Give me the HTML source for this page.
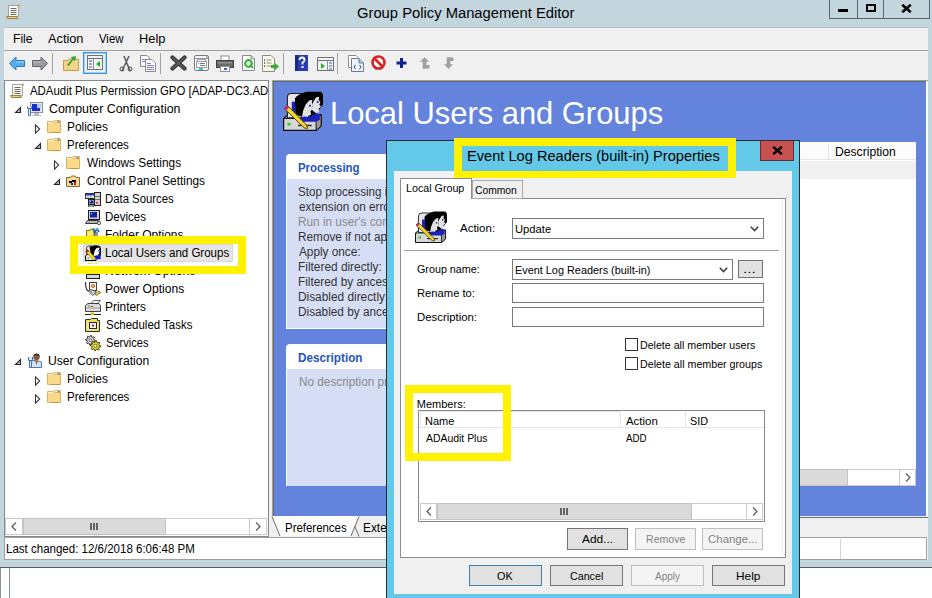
<!DOCTYPE html>
<html><head><meta charset="utf-8"><style>
html,body{margin:0;padding:0;width:932px;height:598px;overflow:hidden;background:#c4d6dd}
body>div,body>span,body>svg{position:absolute}
.t{position:absolute;white-space:nowrap;font-family:"Liberation Sans",sans-serif;line-height:normal;transform-origin:0 0}
#dlg div,#dlg span,#dlg svg{position:absolute}
</style></head><body>
<div style="left:0px;top:0px;width:932px;height:598px;background:#c4d6dd"></div>
<svg style="position:absolute;left:5px;top:4px" width="16" height="16" viewBox="0 0 16 16"><path d="M3.5 1.5 H13.5 V12.5 H3.5 Z" fill="#fffbe0" stroke="#a0a0a0" stroke-width="1"/><path d="M4 2 H13 V7 H4Z" fill="#ffffff"/><path d="M5.5 4.5h6M5.5 6.5h6M5.5 8.5h6M5.5 10.5h6" stroke="#6a6a6a" stroke-width="1"/><path d="M1.5 12.5 H11.5 L12.5 14.5 H2.5Z" fill="#f3cf6a" stroke="#9a8050" stroke-width="1"/><path d="M13 0.5 h2 v2 h-2z" fill="#eca035"/></svg>
<span class="t" style="left:356.76px;top:4px;font-size:15.5px;color:#000;transform:scaleX(0.9526);">Group Policy Management Editor</span>
<div style="left:829px;top:-1px;width:101px;height:20px;border:1px solid #5f6368;box-sizing:border-box;border-top:none"></div>
<div style="left:857px;top:0px;width:1px;height:19px;background:#5f6368"></div>
<div style="left:883px;top:0px;width:1px;height:19px;background:#5f6368"></div>
<div style="left:838px;top:9px;width:10px;height:3px;background:#000"></div>
<div style="left:866px;top:4px;width:10px;height:8px;border:2px solid #000;box-sizing:border-box"></div>
<svg style="left:901px;top:4px;" width="11" height="9" viewBox="0 0 11 9"><path d="M1.2 0.8 L9.8 8.2 M9.8 0.8 L1.2 8.2" stroke="#000" stroke-width="2.6"/></svg>
<div style="left:4px;top:27px;width:924px;height:533px;background:#f0f0f0"></div>
<div style="left:4px;top:27px;width:924px;height:1px;background:#b6bcc0"></div>
<span class="t" style="left:13.01px;top:32px;font-size:12px;color:#000;transform:scaleX(1.0102);">File</span>
<span class="t" style="left:47.98px;top:32px;font-size:12px;color:#000;transform:scaleX(1.0630);">Action</span>
<span class="t" style="left:98.95px;top:32px;font-size:12px;color:#000;transform:scaleX(0.9467);">View</span>
<span class="t" style="left:138.95px;top:32px;font-size:12px;color:#000;transform:scaleX(1.0694);">Help</span>
<div style="left:4px;top:50px;width:924px;height:1px;background:#a0a0a0"></div>
<svg style="position:absolute;left:9px;top:56px" width="16" height="15" viewBox="0 0 16 15"><path d="M0.5 7.5 L7 1 V4.5 H15.5 V10.5 H7 V14 Z" fill="#52acef" stroke="#2a7cc8" stroke-width="1"/><path d="M7 5 H15 V7 H7Z" fill="#7cc4f8"/></svg>
<svg style="position:absolute;left:32px;top:56px" width="16" height="15" viewBox="0 0 16 15"><path d="M15.5 7.5 L9 1 V4.5 H0.5 V10.5 H9 V14 Z" fill="#9a9ea4" stroke="#606468" stroke-width="1"/><path d="M1 5 H9 V7 H1Z" fill="#b0b0b0"/></svg>
<div style="left:52px;top:53px;width:1px;height:21px;background:#a0a0a0"></div>
<svg style="position:absolute;left:63px;top:55px" width="16" height="16" viewBox="0 0 16 16"><path d="M0.5 5.5 H5 L6 4 H15.5 V15.5 H0.5Z" fill="#f2d48a" stroke="#c69a48"/><path d="M4 10 L9 4 L8 2 L13 1 L12 6 L10 5 L6 11Z" fill="#2ea82e"/></svg>
<div style="left:83px;top:52px;width:24px;height:22px;background:#eaf2f9;border:1px solid #3b8fdc;box-shadow:inset 0 0 0 0.5px #6aaee8;box-sizing:border-box"></div>
<svg style="position:absolute;left:87px;top:55px" width="16" height="16" viewBox="0 0 16 16"><rect x="0.5" y="0.5" width="15" height="14" fill="#f4f4f4" stroke="#707070"/><path d="M0.5 3.5 H15.5" stroke="#707070"/><path d="M2 6h3M2 9h3M2 12h3" stroke="#3060c0"/><path d="M6.5 3.5 V14.5" stroke="#909090"/><path d="M13 6 L9 9 L13 12Z" fill="#20b030"/></svg>
<svg style="position:absolute;left:119px;top:55px" width="14" height="17" viewBox="0 0 14 17"><path d="M3 16 L10 1 M11 16 L5 1" stroke="#606060" stroke-width="1.6"/><circle cx="3" cy="14" r="2" fill="none" stroke="#505050"/><circle cx="11" cy="14" r="2" fill="none" stroke="#505050"/></svg>
<svg style="position:absolute;left:140px;top:55px" width="16" height="17" viewBox="0 0 16 17"><path d="M0.5 0.5 H7 L9.5 3 V11.5 H0.5Z" fill="#fff" stroke="#8a8a8a"/><path d="M2 4.5h4M2 6.5h5" stroke="#8a7ad8"/><path d="M5.5 4.5 H12 L15.5 8 V16.5 H5.5Z" fill="#fff" stroke="#8a8a8a"/><path d="M7 8.5h4M7 10.5h7M7 12.5h7M7 14.5h7" stroke="#8a7ad8"/></svg>
<div style="left:160px;top:53px;width:1px;height:21px;background:#a0a0a0"></div>
<svg style="position:absolute;left:170px;top:55px" width="17" height="16" viewBox="0 0 17 16"><path d="M2.5 2.5 L14.5 13.5 M14.5 2.5 L2.5 13.5" stroke="#3a3a3a" stroke-width="4.2" stroke-linecap="round"/><path d="M2.5 2.5 L14.5 13.5 M14.5 2.5 L2.5 13.5" stroke="#606060" stroke-width="1.4" stroke-linecap="round"/></svg>
<svg style="position:absolute;left:194px;top:55px" width="15" height="16" viewBox="0 0 15 16"><rect x="0.5" y="0.5" width="14" height="15" rx="1.5" fill="#f6f6f6" stroke="#7a7a7a"/><path d="M1 3.5 H14" stroke="#9a9a9a"/><rect x="12" y="1.5" width="1.5" height="1" fill="#606060"/><rect x="3.5" y="4.5" width="8" height="2" fill="#eef" stroke="#a0a0b8"/><rect x="2.5" y="6.5" width="10" height="6" fill="#fff" stroke="#a0a0a0"/><rect x="4" y="8" width="1.2" height="1.2" fill="#20b0e8"/><path d="M6 8.5h5M6 10.5h5" stroke="#7a7a7a"/><rect x="5" y="13" width="4" height="2" fill="#30c0e8"/></svg>
<svg style="position:absolute;left:216px;top:55px" width="18" height="17" viewBox="0 0 18 17"><rect x="5" y="1" width="8" height="5" fill="#fff" stroke="#909090"/><rect x="0.5" y="5.5" width="17" height="7" fill="#6a6a6a" stroke="#404040"/><rect x="2" y="7" width="14" height="1.5" fill="#909090"/><rect x="4.5" y="11.5" width="9" height="5" fill="#fff" stroke="#909090"/><rect x="8" y="13" width="3" height="2" fill="#3060d0"/></svg>
<svg style="position:absolute;left:242px;top:55px" width="13" height="16" viewBox="0 0 13 16"><path d="M0.5 0.5 H9 L12.5 4 V15.5 H0.5Z" fill="#fff" stroke="#8a8a8a"/><path d="M9 0.5 V4 H12.5" fill="none" stroke="#8a8a8a"/><circle cx="6.5" cy="8.5" r="3.3" fill="none" stroke="#30b830" stroke-width="2.2"/><path d="M8 10 L11 13" stroke="#30b830" stroke-width="2"/></svg>
<svg style="position:absolute;left:262px;top:55px" width="18" height="17" viewBox="0 0 18 17"><path d="M0.5 0.5 H9 L12.5 4 V16.5 H0.5Z" fill="#fffbe8" stroke="#8a8a8a"/><path d="M2 5h1M2 8h1M2 11h1" stroke="#404040" stroke-width="1.4"/><path d="M4.5 5h5M4.5 8h5M4.5 11h5" stroke="#8a8a8a"/><path d="M9 10 H13 V8 L17 11.5 L13 15 V13 H9Z" fill="#30b030"/></svg>
<div style="left:283px;top:53px;width:1px;height:21px;background:#a0a0a0"></div>
<svg style="position:absolute;left:295px;top:55px" width="13" height="16" viewBox="0 0 13 16"><rect x="0" y="0" width="13" height="16" fill="#2a3cb0"/><rect x="0" y="0" width="3" height="16" fill="#1a2a80"/><path d="M4.5 5 Q4.5 2.5 7 2.5 Q9.5 2.5 9.5 5 Q9.5 6.5 7.5 7.5 V9.5" fill="none" stroke="#fff" stroke-width="1.8"/><rect x="6.5" y="11" width="2" height="2" fill="#fff"/></svg>
<svg style="position:absolute;left:317px;top:57px" width="17" height="15" viewBox="0 0 17 15"><rect x="0.5" y="0.5" width="16" height="13" fill="#f4f4f4" stroke="#707070"/><path d="M0.5 3.5 H16.5" stroke="#707070"/><path d="M10.5 3.5 V13.5" stroke="#909090"/><path d="M4 6 L8 9 L4 12Z" fill="#20b030"/><path d="M12 6h3M12 9h3M12 12h3" stroke="#3060c0"/></svg>
<div style="left:337px;top:53px;width:1px;height:21px;background:#a0a0a0"></div>
<svg style="position:absolute;left:348px;top:55px" width="16" height="17" viewBox="0 0 16 17"><path d="M0.5 0.5 H8 L10 2.5 V12.5 H0.5Z" fill="#fff" stroke="#8a8a8a"/><path d="M3.5 3.5 H11 L15.5 8 V16.5 H3.5Z" fill="#eef4fb" stroke="#707a88"/><path d="M11 3.5 V8 H15.5" fill="#9ec9f0" stroke="#707a88"/><path d="M7.5 10 L6 12 L7.5 14 M11.5 10 L13 12 L11.5 14" stroke="#2040b0" fill="none"/></svg>
<svg style="position:absolute;left:371px;top:55px" width="15" height="15" viewBox="0 0 15 15"><circle cx="7.5" cy="7.5" r="6" fill="#fff" stroke="#e02020" stroke-width="2.6"/><path d="M3.5 3.5 L11.5 11.5" stroke="#e02020" stroke-width="2.6"/><path d="M12 13 a6 6 0 0 1 -9 0" stroke="#606060" stroke-width="0.8" fill="none"/></svg>
<svg style="position:absolute;left:396px;top:58px" width="11" height="10" viewBox="0 0 11 10"><path d="M5.5 0 V10 M0.5 5 H10.5" stroke="#10208a" stroke-width="3"/></svg>
<svg style="position:absolute;left:420px;top:57px" width="10" height="12" viewBox="0 0 10 12"><path d="M0.5 4.5 L4.5 0.5 L8.5 4.5 H6 V11.5 H3 V4.5Z" fill="#a0a0a0" stroke="#a0a0a0" stroke-width="0.6"/><path d="M6 8 H9.5 V11.5 H6Z" fill="#a0a0a0"/></svg>
<svg style="position:absolute;left:444px;top:57px" width="10" height="12" viewBox="0 0 10 12"><path d="M0.5 7.5 L4.5 11.5 L8.5 7.5 H6 V0.5 H3 V7.5Z" fill="#a0a0a0" stroke="#a0a0a0" stroke-width="0.6"/><path d="M6 0.5 H9.5 V4 H6Z" fill="#a0a0a0"/></svg>
<div style="left:4px;top:80px;width:265px;height:457px;background:#fff;border:1px solid #828790;box-sizing:border-box"></div>
<div style="left:83px;top:244px;width:150px;height:18px;background:#e5e5e5;border:1px solid #d9d9d9;box-sizing:border-box"></div>
<svg style="position:absolute;left:9px;top:83px" width="16" height="16" viewBox="0 0 16 16"><path d="M3.5 1.5 H13.5 V12.5 H3.5 Z" fill="#fffbe0" stroke="#a0a0a0" stroke-width="1"/><path d="M4 2 H13 V7 H4Z" fill="#ffffff"/><path d="M5.5 4.5h6M5.5 6.5h6M5.5 8.5h6M5.5 10.5h6" stroke="#6a6a6a" stroke-width="1"/><path d="M1.5 12.5 H11.5 L12.5 14.5 H2.5Z" fill="#f3cf6a" stroke="#9a8050" stroke-width="1"/><path d="M13 0.5 h2 v2 h-2z" fill="#eca035"/></svg>
<span class="t" style="left:30.28px;top:84px;font-size:12px;color:#000;transform:scaleX(0.9506);">ADAudit Plus Permission GPO [ADAP-DC3.ADAP.local] Policy</span>
<svg style="position:absolute;left:14px;top:106px" width="8" height="8" viewBox="0 0 8 8"><path d="M1.5 6.5 L6.5 6.5 L6.5 1.5 Z" fill="#bdbdbd" stroke="#262626" stroke-width="1.1" stroke-linejoin="miter"/></svg>
<svg style="position:absolute;left:27px;top:100px" width="16" height="16" viewBox="0 0 16 16"><rect x="3.5" y="2.5" width="12" height="10" fill="#e4e6ea" stroke="#8a9099"/><rect x="5" y="4" width="8" height="7" fill="#1a2fc8"/><rect x="10" y="4" width="4" height="4" fill="#a8d0f4"/><path d="M7 13 h5 v2 h2 v1 h-9 v-1 h2z" fill="#b8bcc2"/><path d="M1.5 8 V15.5 H3.5 V8 M0.5 6.5 V8.5 H4.5 V6.5" fill="#dfe9f5" stroke="#4a78b8" stroke-width="1"/></svg>
<span class="t" style="left:48.67px;top:102px;font-size:12px;color:#000;transform:scaleX(1.0317);">Computer Configuration</span>
<svg style="position:absolute;left:34px;top:123.5px" width="8" height="10" viewBox="0 0 8 10"><path d="M1.5 0.8 L5.7 5 L1.5 9.2 Z" fill="#fff" stroke="#3b3b3b" stroke-width="1.1"/></svg>
<svg style="position:absolute;left:46px;top:118px" width="16" height="16" viewBox="0 0 16 16"><path d="M1.5 3.5 H7.5 L8.5 2.5 H14.5 V14.5 H1.5 Z" fill="#f9d98c" stroke="#dcb45e"/><path d="M2 4 H7 V5 H2Z" fill="#fff3c8"/><path d="M8.5 4.5 H14" stroke="#d8a450"/><rect x="9" y="3" width="2.5" height="1.2" fill="#ffffff"/><rect x="11.5" y="3" width="2" height="1.2" fill="#3d8fe0"/><path d="M5 14.5 H14" stroke="#cf9238"/></svg>
<span class="t" style="left:67.33px;top:120px;font-size:12px;color:#000;transform:scaleX(0.9892);">Policies</span>
<svg style="position:absolute;left:34px;top:142px" width="8" height="8" viewBox="0 0 8 8"><path d="M1.5 6.5 L6.5 6.5 L6.5 1.5 Z" fill="#bdbdbd" stroke="#262626" stroke-width="1.1" stroke-linejoin="miter"/></svg>
<svg style="position:absolute;left:46px;top:136px" width="16" height="16" viewBox="0 0 16 16"><path d="M1.5 3.5 H7.5 L8.5 2.5 H14.5 V14.5 H1.5 Z" fill="#f9d98c" stroke="#dcb45e"/><path d="M2 4 H7 V5 H2Z" fill="#fff3c8"/><path d="M8.5 4.5 H14" stroke="#d8a450"/><rect x="9" y="3" width="2.5" height="1.2" fill="#ffffff"/><rect x="11.5" y="3" width="2" height="1.2" fill="#3d8fe0"/><path d="M5 14.5 H14" stroke="#cf9238"/></svg>
<span class="t" style="left:67.36px;top:138px;font-size:12px;color:#000;transform:scaleX(0.9560);">Preferences</span>
<svg style="position:absolute;left:53px;top:159.5px" width="8" height="10" viewBox="0 0 8 10"><path d="M1.5 0.8 L5.7 5 L1.5 9.2 Z" fill="#fff" stroke="#3b3b3b" stroke-width="1.1"/></svg>
<svg style="position:absolute;left:65px;top:154px" width="16" height="16" viewBox="0 0 16 16"><path d="M1.5 3.5 H7.5 L8.5 2.5 H14.5 V14.5 H1.5 Z" fill="#f9d98c" stroke="#dcb45e"/><path d="M2 4 H7 V5 H2Z" fill="#fff3c8"/><path d="M8.5 4.5 H14" stroke="#d8a450"/><rect x="9" y="3" width="2.5" height="1.2" fill="#ffffff"/><rect x="11.5" y="3" width="2" height="1.2" fill="#3d8fe0"/><path d="M5 14.5 H14" stroke="#cf9238"/></svg>
<span class="t" style="left:87.25px;top:156px;font-size:12px;color:#000;transform:scaleX(0.9864);">Windows Settings</span>
<svg style="position:absolute;left:53px;top:178px" width="8" height="8" viewBox="0 0 8 8"><path d="M1.5 6.5 L6.5 6.5 L6.5 1.5 Z" fill="#bdbdbd" stroke="#262626" stroke-width="1.1" stroke-linejoin="miter"/></svg>
<svg style="position:absolute;left:65px;top:174px" width="16" height="16" viewBox="0 0 16 16"><path d="M1.5 3.5 H5.5 L6.5 2 H10 L11 3.5 H14.5 V12.5 H1.5 Z" fill="#f3d99a" stroke="#8a6a2a"/><path d="M4 7 h3 v2 h-3z M7 6 h4 v2 h-4z" fill="#000"/><path d="M9 8 h2 v3 h-2z" fill="#e01010"/><path d="M6 9 h2 v2 h-2z" fill="#1030c0"/></svg>
<span class="t" style="left:86.70px;top:174px;font-size:12px;color:#000;transform:scaleX(0.9885);">Control Panel Settings</span>
<svg style="position:absolute;left:85px;top:191px" width="16" height="16" viewBox="0 0 16 16"><rect x="9.5" y="1.5" width="6" height="13" fill="#d4d4d4" stroke="#202020"/><path d="M10 5.5h5M10 8.5h5" stroke="#707070"/><rect x="11" y="11" width="2" height="1.5" fill="#e02020"/><rect x="0.5" y="2.5" width="9" height="5" fill="#f0f0f0" stroke="#303030"/><rect x="1" y="3" width="8" height="1.5" fill="#2040c0"/><path d="M2 6h2M5 6h2" stroke="#909090"/><rect x="3.5" y="8.5" width="6" height="5" fill="#c8c8c8" stroke="#202020"/><rect x="4.5" y="9.5" width="4" height="3" fill="#1020a0"/><rect x="5" y="10" width="1" height="1" fill="#40e0ff"/><rect x="3.5" y="14" width="5" height="2" fill="#e0e0e0" stroke="#303030" stroke-width="0.7"/><rect x="4" y="14.5" width="1.5" height="1" fill="#20b020"/></svg>
<span class="t" style="left:105.37px;top:192px;font-size:12px;color:#000;transform:scaleX(0.9455);">Data Sources</span>
<svg style="position:absolute;left:85px;top:209px" width="16" height="16" viewBox="0 0 16 16"><rect x="3.5" y="1.5" width="11" height="9" fill="#d0d0d0" stroke="#202020"/><rect x="5" y="3" width="7" height="5.5" fill="#1020a0"/><rect x="6" y="4" width="1.2" height="1.2" fill="#40e0ff"/><path d="M0.5 14.5 L2.5 11.5 H13 L14 14.5Z" fill="#e8e8e8" stroke="#202020" stroke-width="0.9"/><path d="M2.5 13 h10" stroke="#404040" stroke-width="1" stroke-dasharray="1 0.6"/><ellipse cx="14" cy="14" rx="1.8" ry="1.6" fill="#e0e0e0" stroke="#303030" stroke-width="0.8"/><path d="M14 12 V10.5" stroke="#303030" stroke-width="0.8"/></svg>
<span class="t" style="left:105.36px;top:210px;font-size:12px;color:#000;transform:scaleX(0.9597);">Devices</span>
<svg style="position:absolute;left:85px;top:227px" width="16" height="16" viewBox="0 0 16 16"><path d="M1.5 3.5 H5 L6 2 H9 V15.5 H1.5Z" fill="#f6ea60" stroke="#8a6a20"/><path d="M3 6 L8 11 M3 9 L7 13" stroke="#fff8c0" stroke-width="0.8"/><path d="M8 2 L10 5 L12 2 L14 5" stroke="#2060c0" stroke-width="1.6" fill="none"/><path d="M9 2 h5" stroke="#70c0f0" stroke-width="1.3"/><path d="M10 5 V9 M12 5 V9" stroke="#303030" stroke-width="1"/><circle cx="11" cy="12" r="2.2" fill="none" stroke="#e01818" stroke-width="1.6"/></svg>
<span class="t" style="left:105.32px;top:228px;font-size:12px;color:#000;transform:scaleX(0.9963);">Folder Options</span>
<svg style="position:absolute;left:85px;top:245px" width="16" height="16" viewBox="0 0 16 16"><path d="M0.5 11 L2 9.5 H11 V15.5 H0.5Z" fill="#e8e8e8" stroke="#000" stroke-width="1"/><rect x="2.5" y="12.5" width="1.5" height="1.5" fill="#30c030"/><path d="M1.5 9.5 V3 Q1.5 1 4 1 H7 V9.5Z" fill="#f0f0f0" stroke="#202020" stroke-width="0.8"/><path d="M4.5 2 Q8 -0.5 13 0.5 Q16 1 16 4 V10 L13 13 L9 14 L6 10 Z" fill="#000"/><path d="M8.5 11 L9.5 6 L11.5 3 L14.5 2.5 L14 4.5 L15 6 L14 7 L14.5 8.5 L13 9.5 L13.5 11 Z" fill="#f4f4f4"/><rect x="13" y="5" width="1.3" height="1.3" fill="#1030d0"/><path d="M9.5 11 Q12 10 13.5 10.5 L15.5 10 L15.8 14 L10 14.5Z" fill="#1020c0"/><path d="M0.5 6.5 L2.5 4.5 L10.5 13 L10.5 15 L8.5 15 Z" fill="#f6e020" stroke="#6a4a10" stroke-width="0.6"/><path d="M0.5 6.5 L2.5 4.5 L4 6 L2 8Z" fill="#c02020"/></svg>
<span class="t" style="left:105.36px;top:246px;font-size:12px;color:#000;transform:scaleX(0.9595);">Local Users and Groups</span>
<svg style="position:absolute;left:85px;top:263px" width="16" height="16" viewBox="0 0 16 16"><rect x="2.5" y="3.5" width="11" height="7" fill="#e0e0e0" stroke="#303030"/><rect x="1.5" y="11.5" width="13" height="4" fill="#d8d8d8" stroke="#202020"/><path d="M3 0.5 Q8 -1 13 0.5" stroke="#e8e040" stroke-width="1.5" fill="none"/></svg>
<span class="t" style="left:105.30px;top:264px;font-size:12px;color:#000;transform:scaleX(1.0197);">Network Options</span>
<svg style="position:absolute;left:85px;top:281px" width="16" height="16" viewBox="0 0 16 16"><rect x="4.5" y="1.5" width="7" height="8" fill="#f6f6f6" stroke="#404040"/><path d="M8 3 v4 M6 5 h4" stroke="#e02020" stroke-width="1.4"/><rect x="7" y="4" width="2" height="2" fill="#f0c000"/><path d="M0.5 1 Q0.5 8 3 10" fill="none" stroke="#303030" stroke-width="1.1"/><path d="M3 10 L6 8.5 L11 10.5 L8 14.5 Z" fill="#d8d8d8" stroke="#303030" stroke-width="0.8"/><path d="M6 8.5 L4 12 L8 14.5" fill="#a0a0a0"/><path d="M10 12 L14.5 10 L15.5 12 L11 14.5Z" fill="#f0d040" stroke="#605010" stroke-width="0.7"/></svg>
<span class="t" style="left:105.31px;top:282px;font-size:12px;color:#000;transform:scaleX(1.0067);">Power Options</span>
<svg style="position:absolute;left:85px;top:299px" width="16" height="16" viewBox="0 0 16 16"><path d="M5 5 L9 1.5 H15.5 L11.5 5Z" fill="#fafafa" stroke="#404040" stroke-width="0.8"/><path d="M0.5 6.5 L3 4.5 H14 L15.5 6.5 V12.5 H0.5Z" fill="#dcdcdc" stroke="#303030" stroke-width="0.9"/><path d="M1 9 H15" stroke="#a0a0a0" stroke-width="1"/><rect x="3" y="6.5" width="2" height="1" fill="#20a020"/><rect x="6" y="7" width="2" height="1" fill="#e02020"/><path d="M0 15.5 H16" stroke="#202020" stroke-width="1"/><rect x="5.5" y="13.5" width="3.5" height="2.5" fill="#e8b000"/></svg>
<span class="t" style="left:105.32px;top:300px;font-size:12px;color:#000;transform:scaleX(0.9918);">Printers</span>
<svg style="position:absolute;left:85px;top:317px" width="16" height="16" viewBox="0 0 16 16"><path d="M0.5 2.5 H5.5 L6.5 1.5 H12.5 V3.5 H14.5 V14.5 H0.5 Z" fill="#eee050" stroke="#303030"/><path d="M2 5 H13 V13 H2Z" fill="#f4ea70"/><path d="M2 6 L9 13 M6 5 L13 12 M2 10 L5 13" stroke="#fff8c0" stroke-width="0.7"/><rect x="4.5" y="5.5" width="7" height="6" fill="#f8f8f8" stroke="#202070"/><rect x="7" y="7.5" width="2" height="2" fill="#c02020"/></svg>
<span class="t" style="left:105.78px;top:318px;font-size:12px;color:#000;transform:scaleX(0.9542);">Scheduled Tasks</span>
<svg style="position:absolute;left:85px;top:335px" width="16" height="16" viewBox="0 0 16 16"><polygon points="10.30,5.20 10.21,6.14 8.52,6.45 8.21,7.01 8.89,8.59 8.17,9.19 6.75,8.22 6.14,8.40 5.50,10.00 4.56,9.91 4.25,8.22 3.69,7.91 2.11,8.59 1.51,7.87 2.48,6.45 2.30,5.84 0.70,5.20 0.79,4.26 2.48,3.95 2.79,3.39 2.11,1.81 2.83,1.21 4.25,2.18 4.86,2.00 5.50,0.40 6.44,0.49 6.75,2.18 7.31,2.49 8.89,1.81 9.49,2.53 8.52,3.95 8.70,4.56" fill="#e4e4e4" stroke="#202020" stroke-width="0.9"/><circle cx="5.5" cy="5.2" r="1.44" fill="#fff" stroke="#202020" stroke-width="0.7"/><polygon points="15.70,10.80 15.60,11.81 13.77,12.15 13.44,12.76 14.18,14.48 13.39,15.12 11.85,14.07 11.19,14.27 10.50,16.00 9.49,15.90 9.15,14.07 8.54,13.74 6.82,14.48 6.18,13.69 7.23,12.15 7.03,11.49 5.30,10.80 5.40,9.79 7.23,9.45 7.56,8.84 6.82,7.12 7.61,6.48 9.15,7.53 9.81,7.33 10.50,5.60 11.51,5.70 11.85,7.53 12.46,7.86 14.18,7.12 14.82,7.91 13.77,9.45 13.97,10.11" fill="#f2dc20" stroke="#303010" stroke-width="0.9"/><circle cx="10.5" cy="10.8" r="1.56" fill="#fff" stroke="#303010" stroke-width="0.7"/></svg>
<span class="t" style="left:105.80px;top:336px;font-size:12px;color:#000;transform:scaleX(0.9259);">Services</span>
<svg style="position:absolute;left:14px;top:358px" width="8" height="8" viewBox="0 0 8 8"><path d="M1.5 6.5 L6.5 6.5 L6.5 1.5 Z" fill="#bdbdbd" stroke="#262626" stroke-width="1.1" stroke-linejoin="miter"/></svg>
<svg style="position:absolute;left:27px;top:352px" width="16" height="16" viewBox="0 0 16 16"><path d="M4.5 9 Q9 7 14.5 10 V15.5 H4.5Z" fill="#d4e4f2" stroke="#4a7ab0" stroke-width="1"/><path d="M8 9 L9.5 13 L11 9" fill="#b06030"/><circle cx="9.5" cy="5" r="3.2" fill="#8a5a30"/><path d="M6.3 4.5 Q6.5 1.5 9.5 1.5 Q12.5 1.5 12.7 4.5 Q11 3 9.5 3.2 Q8 3 6.3 4.5Z" fill="#2a2a2a"/><path d="M2.5 8 V15.5 H4.5 V8 M1.5 5 V8.5 H5.5 V5" fill="#dfe9f5" stroke="#3a70b8" stroke-width="1"/></svg>
<span class="t" style="left:48.36px;top:354px;font-size:12px;color:#000;transform:scaleX(1.0118);">User Configuration</span>
<svg style="position:absolute;left:34px;top:375.5px" width="8" height="10" viewBox="0 0 8 10"><path d="M1.5 0.8 L5.7 5 L1.5 9.2 Z" fill="#fff" stroke="#3b3b3b" stroke-width="1.1"/></svg>
<svg style="position:absolute;left:46px;top:370px" width="16" height="16" viewBox="0 0 16 16"><path d="M1.5 3.5 H7.5 L8.5 2.5 H14.5 V14.5 H1.5 Z" fill="#f9d98c" stroke="#dcb45e"/><path d="M2 4 H7 V5 H2Z" fill="#fff3c8"/><path d="M8.5 4.5 H14" stroke="#d8a450"/><rect x="9" y="3" width="2.5" height="1.2" fill="#ffffff"/><rect x="11.5" y="3" width="2" height="1.2" fill="#3d8fe0"/><path d="M5 14.5 H14" stroke="#cf9238"/></svg>
<span class="t" style="left:67.33px;top:372px;font-size:12px;color:#000;transform:scaleX(0.9892);">Policies</span>
<svg style="position:absolute;left:34px;top:393.5px" width="8" height="10" viewBox="0 0 8 10"><path d="M1.5 0.8 L5.7 5 L1.5 9.2 Z" fill="#fff" stroke="#3b3b3b" stroke-width="1.1"/></svg>
<svg style="position:absolute;left:46px;top:388px" width="16" height="16" viewBox="0 0 16 16"><path d="M1.5 3.5 H7.5 L8.5 2.5 H14.5 V14.5 H1.5 Z" fill="#f9d98c" stroke="#dcb45e"/><path d="M2 4 H7 V5 H2Z" fill="#fff3c8"/><path d="M8.5 4.5 H14" stroke="#d8a450"/><rect x="9" y="3" width="2.5" height="1.2" fill="#ffffff"/><rect x="11.5" y="3" width="2" height="1.2" fill="#3d8fe0"/><path d="M5 14.5 H14" stroke="#cf9238"/></svg>
<span class="t" style="left:67.35px;top:390px;font-size:12px;color:#000;transform:scaleX(0.9640);">Preferences</span>
<div style="left:268px;top:81px;width:1px;height:455px;background:#828790"></div>
<div style="left:269px;top:81px;width:3px;height:437px;background:#f0f0f0"></div>
<div style="left:5px;top:518px;width:262px;height:17px;background:#fff;border-top:1px solid #cdcdcd;border-bottom:1px solid #cdcdcd;box-sizing:border-box"></div>
<div style="left:5px;top:518px;width:18px;height:17px;border:1px solid #c9c9c9;box-sizing:border-box;background:#fff"></div>
<svg style="position:absolute;left:11px;top:522px" width="6" height="9" viewBox="0 0 6 9"><path d="M5 0.5 L1 4.5 L5 8.5" stroke="#606060" stroke-width="1.3" fill="none"/></svg>
<div style="left:249px;top:518px;width:18px;height:17px;border:1px solid #c9c9c9;box-sizing:border-box;background:#fff"></div>
<svg style="position:absolute;left:255px;top:522px" width="6" height="9" viewBox="0 0 6 9"><path d="M1 0.5 L5 4.5 L1 8.5" stroke="#606060" stroke-width="1.3" fill="none"/></svg>
<div style="left:23px;top:518px;width:143px;height:17px;background:#dadada;border:1px solid #c3c3c3;box-sizing:border-box"></div>
<svg style="position:absolute;left:90px;top:523px" width="9" height="8" viewBox="0 0 9 8"><path d="M1 0 V7 M4 0 V7 M7 0 V7" stroke="#505050" stroke-width="1.7"/></svg>
<div style="left:70px;top:236px;width:176px;height:38px;border:8px solid #fff200;box-sizing:border-box"></div>
<div style="left:272px;top:80px;width:656px;height:437px;background:#fff;border-left:1px solid #a0a0a0;border-top:1px solid #a0a0a0;box-sizing:border-box"></div>
<div style="left:273px;top:81px;width:653px;height:435px;background:#696969"></div>
<div style="left:274px;top:82px;width:652px;height:434px;background:#6383dd"></div>
<svg style="position:absolute;left:283px;top:91px" width="40" height="40" viewBox="0 0 32 32"><path d="M0.5 22 L4 19 H30.5 V28 L26.5 31.5 H0.5Z" fill="#d6d6d6" stroke="#101010" stroke-width="1"/><path d="M26.5 22 L30.5 19 V28 L26.5 31.5Z" fill="#9a9a9a" stroke="#101010" stroke-width="0.8"/><path d="M0.5 22 H26.5" stroke="#101010" stroke-width="0.8"/><rect x="3.5" y="25.5" width="2.5" height="2" fill="#30c030"/><rect x="12" y="27" width="11" height="1.2" fill="#303030"/><path d="M3.5 21.5 V5 Q3.5 2 7 2 H16 V21.5Z" fill="#e6e6e6" stroke="#202020" stroke-width="0.9"/><path d="M7 8.5 H11 V18 H7Z" fill="#1a22b8"/><path d="M9.5 6 Q12 2 19 0.5 H30 Q32 1 32 4 V11 L28 16 L24 21 L16 21 L10.5 19 Z" fill="#000"/><path d="M15 22 L16 16 L18 11 L21 7.5 L23.5 7 L23 9 L24 11 L23 13 L24 14.5 L22 16 L22.5 19 L20 20 L21 22.5 Z" fill="#e2e2e2"/><path d="M23 15 L24 9 L26.5 5 L29 4.5 L28.5 7 L30 9 L29 11 L30.5 12.5 L28.5 14 L29 17 L26 17.5 Z" fill="#e2e2e2"/><rect x="20.8" y="11" width="1.5" height="1.5" fill="#2030c0"/><rect x="27" y="8" width="1.5" height="1.5" fill="#2030c0"/><path d="M13 22 Q16 19.5 21 21 L25 18.5 Q29 17 29.5 20 V23 L26 24.5 H14Z" fill="#1a22b8"/><path d="M1 14 L3.5 11.5 L19 27.5 L19.5 30 L17 29.5 Z" fill="#f2dc2a" stroke="#5a3a10" stroke-width="0.8"/><path d="M1 14 L3.5 11.5 L5 13 L2.5 15.5Z" fill="#d0206a"/></svg>
<span class="t" style="left:329.97px;top:95px;font-size:32px;color:#fff;transform:scaleX(0.9655);">Local Users and Groups</span>
<div style="left:286px;top:154px;width:120px;height:175px;background:#fff;border-radius:4px 0 0 0"></div>
<div style="left:287px;top:179px;width:119px;height:149px;background:#d6def6"></div>
<span class="t" style="left:297.94px;top:161px;font-size:12px;color:#1f56c2;font-weight:700;transform:scaleX(0.9511);">Processing</span>
<span class="t" style="left:298.47px;top:185px;font-size:12px;color:#333;transform:scaleX(0.9710);">Stop processing items in this</span>
<span class="t" style="left:298.50px;top:200px;font-size:12px;color:#333;transform:scaleX(0.9805);">extension on error:</span>
<span class="t" style="left:298.03px;top:215px;font-size:12px;color:#8a8a8a;transform:scaleX(0.9825);">Run in user&#x27;s context:</span>
<span class="t" style="left:298.03px;top:230px;font-size:12px;color:#333;transform:scaleX(0.9819);">Remove if not applied:</span>
<span class="t" style="left:298.98px;top:245px;font-size:12px;color:#333;transform:scaleX(0.9822);">Apply once:</span>
<span class="t" style="left:298.03px;top:260px;font-size:12px;color:#333;transform:scaleX(0.9893);">Filtered directly:</span>
<span class="t" style="left:298.03px;top:275px;font-size:12px;color:#333;transform:scaleX(0.9836);">Filtered by ancestor:</span>
<span class="t" style="left:298.03px;top:290px;font-size:12px;color:#333;transform:scaleX(0.9875);">Disabled directly:</span>
<span class="t" style="left:298.03px;top:305px;font-size:12px;color:#333;transform:scaleX(0.9825);">Disabled by ancestor:</span>
<div style="left:286px;top:344px;width:120px;height:142px;background:#fff;border-radius:4px 0 0 0"></div>
<div style="left:287px;top:369px;width:119px;height:117px;background:#d6def6"></div>
<span class="t" style="left:297.62px;top:351px;font-size:12px;color:#1f56c2;font-weight:700;transform:scaleX(0.9773);">Description</span>
<span class="t" style="left:298.63px;top:375px;font-size:12px;color:#8a8a8a;transform:scaleX(0.9807);">No description provided.</span>
<div style="left:790px;top:142px;width:126px;height:344px;background:#fff"></div>
<div style="left:790px;top:142px;width:126px;height:18px;background:#fcfcfc;border-bottom:1px solid #e5e5e5;box-sizing:border-box"></div>
<div style="left:828px;top:144px;width:1px;height:16px;background:#e5e5e5"></div>
<span class="t" style="left:834.50px;top:145px;font-size:12px;color:#000;transform:scaleX(1.0127);">Description</span>
<div style="left:790px;top:161px;width:126px;height:18px;background:#f0f0f0"></div>
<div style="left:790px;top:469px;width:126px;height:17px;background:#fff;border-top:1px solid #cdcdcd;border-bottom:1px solid #cdcdcd;box-sizing:border-box"></div>
<div style="left:899px;top:469px;width:17px;height:17px;border:1px solid #c9c9c9;box-sizing:border-box;background:#fff"></div>
<svg style="position:absolute;left:905px;top:473px" width="6" height="9" viewBox="0 0 6 9"><path d="M1 0.5 L5 4.5 L1 8.5" stroke="#606060" stroke-width="1.3" fill="none"/></svg>
<div style="left:790px;top:469px;width:58px;height:17px;background:#dadada;border:1px solid #c3c3c3;box-sizing:border-box"></div>
<div style="left:272px;top:516px;width:656px;height:21px;background:#f0f0f0"></div>
<div style="left:272px;top:517px;width:656px;height:1px;background:#6d6d6d"></div>
<svg style="position:absolute;left:266px;top:515px" width="140" height="23" viewBox="0 0 140 23"><path d="M85 2 L93 21.5 H200 V2Z" fill="#f0f0f0"/><path d="M85 2 L93 21.5" fill="none" stroke="#6d6d6d" stroke-width="1"/><path d="M6 1 L14 21 H85 L93 1Z" fill="#fff"/><path d="M6 1.5 L14 21 M85 21 L93 1.5" fill="none" stroke="#6d6d6d" stroke-width="1"/></svg>
<span class="t" style="left:284.56px;top:521px;font-size:12px;color:#000;transform:scaleX(0.9529);">Preferences</span>
<span class="t" style="left:363.33px;top:521px;font-size:12px;color:#000;transform:scaleX(0.9889);">Extended</span>
<div style="left:4px;top:537px;width:923px;height:23px;background:#fff;border:1px solid #a0a0a0;box-sizing:border-box"></div>
<div style="left:840px;top:539px;width:1px;height:20px;background:#d5d5d5"></div>
<span class="t" style="left:5.66px;top:542px;font-size:12px;color:#000;transform:scaleX(0.9597);">Last changed: 12/6/2018 6:06:48 PM</span>
<div style="left:0px;top:567px;width:932px;height:1px;background:#5a5f66"></div>
<div style="left:0px;top:568px;width:932px;height:30px;background:#fff"></div>
<div style="left:0px;top:568px;width:1px;height:30px;background:#8a8f96"></div>
<div style="left:9px;top:568px;width:1px;height:30px;background:#8a8f96"></div>
<div style="left:386px;top:140px;width:414px;height:460px;background:#64c8e8;border:1px solid #2b2b2b;box-sizing:border-box"></div>
<div style="left:394px;top:171px;width:398px;height:423px;background:#f0f0f0"></div>
<div style="left:760px;top:141px;width:34px;height:20px;background:#c75050;border:1px solid #5f3030;box-sizing:border-box;border-top:none"></div>
<svg style="position:absolute;left:772px;top:146px" width="11" height="9" viewBox="0 0 11 9"><path d="M1.2 0.8 L9.8 8.2 M9.8 0.8 L1.2 8.2" stroke="#000" stroke-width="2.4"/></svg>
<div style="left:454px;top:138px;width:282px;height:40px;background:#fff200"></div>
<div style="left:462px;top:146px;width:266px;height:25px;background:#64c8e8"></div>
<span class="t" style="left:466.60px;top:147px;font-size:15px;color:#000;transform:scaleX(0.9747);">Event Log Readers (built-in) Properties</span>
<div style="left:400px;top:198px;width:386px;height:360px;background:#fff;border:1px solid #898c95;box-sizing:border-box"></div>
<div style="left:782px;top:199px;width:1px;height:357px;background:#f0f0f0"></div>
<div style="left:400px;top:178px;width:72px;height:21px;background:#fff;border:1px solid #898c95;border-bottom:none;box-sizing:border-box"></div>
<div style="left:472px;top:180px;width:51px;height:19px;background:#f0f0f0;border:1px solid #acacac;box-sizing:border-box"></div>
<span class="t" style="left:406.12px;top:182px;font-size:11px;color:#000;transform:scaleX(0.9733);">Local Group</span>
<span class="t" style="left:475.08px;top:184px;font-size:11px;color:#000;transform:scaleX(0.9366);">Common</span>
<svg style="position:absolute;left:415px;top:211px" width="32" height="32" viewBox="0 0 32 32"><path d="M0.5 22 L4 19 H30.5 V28 L26.5 31.5 H0.5Z" fill="#d6d6d6" stroke="#101010" stroke-width="1"/><path d="M26.5 22 L30.5 19 V28 L26.5 31.5Z" fill="#9a9a9a" stroke="#101010" stroke-width="0.8"/><path d="M0.5 22 H26.5" stroke="#101010" stroke-width="0.8"/><rect x="3.5" y="25.5" width="2.5" height="2" fill="#30c030"/><rect x="12" y="27" width="11" height="1.2" fill="#303030"/><path d="M3.5 21.5 V5 Q3.5 2 7 2 H16 V21.5Z" fill="#e6e6e6" stroke="#202020" stroke-width="0.9"/><path d="M7 8.5 H11 V18 H7Z" fill="#1a22b8"/><path d="M9.5 6 Q12 2 19 0.5 H30 Q32 1 32 4 V11 L28 16 L24 21 L16 21 L10.5 19 Z" fill="#000"/><path d="M15 22 L16 16 L18 11 L21 7.5 L23.5 7 L23 9 L24 11 L23 13 L24 14.5 L22 16 L22.5 19 L20 20 L21 22.5 Z" fill="#e2e2e2"/><path d="M23 15 L24 9 L26.5 5 L29 4.5 L28.5 7 L30 9 L29 11 L30.5 12.5 L28.5 14 L29 17 L26 17.5 Z" fill="#e2e2e2"/><rect x="20.8" y="11" width="1.5" height="1.5" fill="#2030c0"/><rect x="27" y="8" width="1.5" height="1.5" fill="#2030c0"/><path d="M13 22 Q16 19.5 21 21 L25 18.5 Q29 17 29.5 20 V23 L26 24.5 H14Z" fill="#1a22b8"/><path d="M1 14 L3.5 11.5 L19 27.5 L19.5 30 L17 29.5 Z" fill="#f2dc2a" stroke="#5a3a10" stroke-width="0.8"/><path d="M1 14 L3.5 11.5 L5 13 L2.5 15.5Z" fill="#d0206a"/></svg>
<span class="t" style="left:459.58px;top:222px;font-size:11px;color:#000;transform:scaleX(1.0429);">Action:</span>
<div style="left:512px;top:218px;width:252px;height:21px;background:#fff;border:1px solid #7a7a7a;box-sizing:border-box"></div>
<span class="t" style="left:514.63px;top:223px;font-size:11px;color:#000;transform:scaleX(1.0195);">Update</span>
<svg style="position:absolute;left:750px;top:226px" width="9" height="6" viewBox="0 0 9 6"><path d="M0.8 0.8 L4.5 4.5 L8.2 0.8" stroke="#404040" stroke-width="1.6" fill="none"/></svg>
<div style="left:404px;top:250px;width:375px;height:1px;background:#a0a0a0"></div>
<span class="t" style="left:417.16px;top:263px;font-size:11px;color:#000;transform:scaleX(0.9770);">Group name:</span>
<div style="left:512px;top:259px;width:221px;height:21px;background:#fff;border:1px solid #7a7a7a;box-sizing:border-box"></div>
<span class="t" style="left:514.61px;top:264px;font-size:11px;color:#000;transform:scaleX(0.9884);">Event Log Readers (built-in)</span>
<svg style="position:absolute;left:719px;top:267px" width="9" height="6" viewBox="0 0 9 6"><path d="M0.8 0.8 L4.5 4.5 L8.2 0.8" stroke="#404040" stroke-width="1.6" fill="none"/></svg>
<div style="left:738px;top:260px;width:25px;height:18px;background:#e1e1e1;border:1px solid #707070;box-sizing:border-box"></div>
<span class="t" style="left:742.90px;top:263px;font-size:11px;color:#000;transform:scaleX(1.3967);">...</span>
<span class="t" style="left:416.78px;top:287px;font-size:11px;color:#000;transform:scaleX(1.0190);">Rename to:</span>
<div style="left:512px;top:283px;width:252px;height:20px;background:#fff;border:1px solid #7a7a7a;box-sizing:border-box"></div>
<span class="t" style="left:416.77px;top:311px;font-size:11px;color:#000;transform:scaleX(1.0326);">Description:</span>
<div style="left:512px;top:307px;width:252px;height:20px;background:#fff;border:1px solid #7a7a7a;box-sizing:border-box"></div>
<div style="left:625px;top:338px;width:13px;height:13px;background:#fff;border:1px solid #333;box-sizing:border-box"></div>
<span class="t" style="left:639.93px;top:339px;font-size:11px;color:#000;transform:scaleX(0.9668);">Delete all member users</span>
<div style="left:625px;top:357px;width:13px;height:13px;background:#fff;border:1px solid #333;box-sizing:border-box"></div>
<span class="t" style="left:639.92px;top:358px;font-size:11px;color:#000;transform:scaleX(0.9707);">Delete all member groups</span>
<span class="t" style="left:416.80px;top:398px;font-size:11px;color:#000;">Members:</span>
<div style="left:418px;top:410px;width:347px;height:112px;background:#fff;border:1px solid #828790;box-sizing:border-box"></div>
<div style="left:419px;top:411px;width:345px;height:17px;background:#fff;border-bottom:1px solid #e5e5e5;box-sizing:border-box"></div>
<div style="left:420px;top:411px;width:200px;height:17px;background:#fff;border:1px solid #e5e5e5;border-right:none;box-sizing:border-box"></div>
<div style="left:620px;top:412px;width:1px;height:16px;background:#e5e5e5"></div>
<div style="left:685px;top:412px;width:1px;height:16px;background:#e5e5e5"></div>
<span class="t" style="left:425.00px;top:415px;font-size:11px;color:#000;">Name</span>
<span class="t" style="left:625.78px;top:415px;font-size:11px;color:#000;transform:scaleX(1.0390);">Action</span>
<span class="t" style="left:689.61px;top:415px;font-size:11px;color:#000;transform:scaleX(0.9820);">SID</span>
<span class="t" style="left:425.98px;top:432px;font-size:11px;color:#000;transform:scaleX(0.9474);">ADAudit Plus</span>
<span class="t" style="left:625.98px;top:432px;font-size:11px;color:#000;transform:scaleX(0.8820);">ADD</span>
<div style="left:420px;top:503px;width:343px;height:17px;background:#fff;border-top:1px solid #cdcdcd;border-bottom:1px solid #cdcdcd;box-sizing:border-box"></div>
<div style="left:420px;top:503px;width:17px;height:17px;border:1px solid #c9c9c9;box-sizing:border-box;background:#fff"></div>
<svg style="position:absolute;left:426px;top:507px" width="6" height="9" viewBox="0 0 6 9"><path d="M5 0.5 L1 4.5 L5 8.5" stroke="#606060" stroke-width="1.3" fill="none"/></svg>
<div style="left:746px;top:503px;width:17px;height:17px;border:1px solid #c9c9c9;box-sizing:border-box;background:#fff"></div>
<svg style="position:absolute;left:752px;top:507px" width="6" height="9" viewBox="0 0 6 9"><path d="M1 0.5 L5 4.5 L1 8.5" stroke="#606060" stroke-width="1.3" fill="none"/></svg>
<div style="left:437px;top:503px;width:255px;height:17px;background:#dadada;border:1px solid #c3c3c3;box-sizing:border-box"></div>
<svg style="position:absolute;left:560px;top:508px" width="9" height="8" viewBox="0 0 9 8"><path d="M1 0 V7 M4 0 V7 M7 0 V7" stroke="#505050" stroke-width="1.7"/></svg>
<div style="left:405px;top:385px;width:106px;height:76px;border:8px solid #fff200;box-sizing:border-box"></div>
<div style="left:567px;top:528px;width:61px;height:22px;background:#e1e1e1;border:1px solid #767676;box-sizing:border-box"></div>
<span class="t" style="left:582.48px;top:533px;font-size:11px;color:#000;transform:scaleX(1.0825);">Add...</span>
<div style="left:635px;top:528px;width:61px;height:22px;background:#f4f4f4;border:1px solid #bfbfbf;box-sizing:border-box"></div>
<span class="t" style="left:645.63px;top:533px;font-size:11px;color:#838383;transform:scaleX(0.9604);">Remove</span>
<div style="left:702px;top:528px;width:61px;height:22px;background:#f4f4f4;border:1px solid #bfbfbf;box-sizing:border-box"></div>
<span class="t" style="left:707.92px;top:533px;font-size:11px;color:#838383;transform:scaleX(1.0404);">Change...</span>
<div style="left:469px;top:565px;width:73px;height:21px;background:#e1e1e1;border:1px solid #3c7fb1;box-sizing:border-box"></div>
<span class="t" style="left:497.49px;top:570px;font-size:11px;color:#000;transform:scaleX(0.9837);">OK</span>
<div style="left:550px;top:565px;width:73px;height:21px;background:#e1e1e1;border:1px solid #767676;box-sizing:border-box"></div>
<span class="t" style="left:569.96px;top:570px;font-size:11px;color:#000;transform:scaleX(0.9713);">Cancel</span>
<div style="left:631px;top:565px;width:73px;height:21px;background:#f4f4f4;border:1px solid #bfbfbf;box-sizing:border-box"></div>
<span class="t" style="left:654.98px;top:570px;font-size:11px;color:#838383;transform:scaleX(0.9100);">Apply</span>
<div style="left:712px;top:565px;width:73px;height:21px;background:#e1e1e1;border:1px solid #767676;box-sizing:border-box"></div>
<span class="t" style="left:736.02px;top:570px;font-size:11px;color:#000;transform:scaleX(1.0819);">Help</span>
</body></html>
